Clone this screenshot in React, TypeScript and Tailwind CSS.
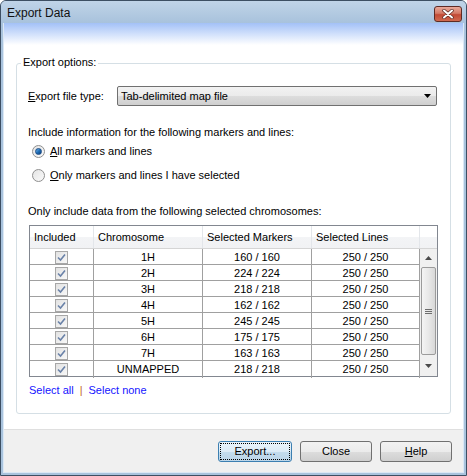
import React, { useState } from 'react';

type Row = { chrom: string; markers: string; lines: string };

const ROWS: Row[] = [
  { chrom: '1H', markers: '160 / 160', lines: '250 / 250' },
  { chrom: '2H', markers: '224 / 224', lines: '250 / 250' },
  { chrom: '3H', markers: '218 / 218', lines: '250 / 250' },
  { chrom: '4H', markers: '162 / 162', lines: '250 / 250' },
  { chrom: '5H', markers: '245 / 245', lines: '250 / 250' },
  { chrom: '6H', markers: '175 / 175', lines: '250 / 250' },
  { chrom: '7H', markers: '163 / 163', lines: '250 / 250' },
  { chrom: 'UNMAPPED', markers: '218 / 218', lines: '250 / 250' },
];

const Radio = ({ checked }: { checked: boolean }) => (
  <span className="w-[13px] h-[13px] rounded-full border border-[#8f8f8f] bg-gradient-to-br from-[#e4e4e4] to-[#fafafa] flex items-center justify-center shrink-0">
    {checked && (
      <span className="w-[7px] h-[7px] rounded-full bg-gradient-to-br from-[#6fb4e8] via-[#1f6fb8] to-[#0d3d7a] border border-[#1a4b85]" />
    )}
  </span>
);

const CheckBox = () => (
  <span className="w-[13px] h-[13px] border border-[#a7a7a7] bg-gradient-to-br from-[#e2e2e2] to-[#f8f8f8] flex items-center justify-center">
    <svg width="9" height="9" viewBox="0 0 9 9">
      <path d="M1 4.5 L3.5 7 L8 1.5" fill="none" stroke="#6a82a8" strokeWidth="1.6" />
    </svg>
  </span>
);

const Button = ({ children, focused }: { children: React.ReactNode; focused?: boolean }) => (
  <button
    className={
      focused
        ? 'w-[74px] h-[21px] rounded-[3px] border border-[#3c7fb1] bg-[linear-gradient(#eaf4fb_0%,#dcebf6_50%,#c3dced_51%,#bcd5e8_100%)] p-[1px]'
        : 'w-[72px] h-[21px] rounded-[3px] border border-[#707070] bg-[linear-gradient(#f2f2f2_0%,#ebebeb_50%,#dddddd_51%,#cfcfcf_100%)]'
    }
  >
    {focused ? (
      <span className="w-full h-full border border-dotted border-black flex items-center justify-center">{children}</span>
    ) : (
      <span className="w-full h-full flex items-center justify-center">{children}</span>
    )}
  </button>
);

const App: React.FC = () => {
  const [mode, setMode] = useState<'all' | 'selected'>('all');

  return (
    <div className="w-[467px] h-[476px] bg-[#a9c3dd] border border-[#3d4f63] rounded-t-[6px] flex flex-col text-[11px] text-black font-['Liberation_Sans',Arial,sans-serif] select-none overflow-hidden">
      {/* Title bar */}
      <div className="h-[22px] shrink-0 flex items-center bg-gradient-to-b from-[#c0d4e8] to-[#a8c2dc] pl-[6px] pr-[4px]">
        <span className="text-[12px] text-[#111] mt-[2px]">Export Data</span>
        <button className="ml-auto mt-[3px] w-[28px] h-[16px] rounded-[3px] border border-[#5e2a24] bg-[linear-gradient(#e9a99a_0%,#d47a66_45%,#c24a35_55%,#d06a50_100%)] flex items-center justify-center">
          <svg width="12" height="10" viewBox="0 0 12 10">
            <path d="M2 1.5 L10 8.5 M10 1.5 L2 8.5" stroke="#5a2a22" strokeWidth="3.4" strokeLinecap="round" />
            <path d="M2 1.5 L10 8.5 M10 1.5 L2 8.5" stroke="#ffffff" strokeWidth="2" strokeLinecap="round" />
          </svg>
        </button>
      </div>

      {/* Client area */}
      <div className="flex-1 flex flex-col mx-[2px] mb-[2px] border-x border-b border-[#dbe8f5]">
        <div className="h-[406px] shrink-0 bg-[linear-gradient(#a3c1f7_0px,#ffffff_22px)] pt-[40px] pl-[12px]">
          {/* Group box */}
          <div className="relative w-[435px] h-[351px] border border-[#d5dfe5] rounded-[3px] pl-[11px] pt-[22px]">
            <span className="absolute left-[4px] top-[-8px] bg-white px-[2px] leading-[13px]">Export options:</span>

            <div className="flex items-center h-[20px]">
              <span className="w-[89px]">
                <u>E</u>xport file type:
              </span>
              <div className="w-[320px] h-[20px] border border-[#707070] rounded-[2px] bg-[linear-gradient(#f2f2f2_0%,#ebebeb_50%,#dddddd_51%,#cfcfcf_100%)] flex items-center pl-[3px] pr-[5px]">
                <span>Tab-delimited map file</span>
                <svg className="ml-auto" width="7" height="4" viewBox="0 0 7 4">
                  <path d="M0 0 L7 0 L3.5 4 Z" fill="#000" />
                </svg>
              </div>
            </div>

            <div className="mt-[20px] leading-[13px]">Include information for the following markers and lines:</div>

            <div className="mt-[6px] flex items-center gap-[5px] leading-[13px] pl-[4px]" onClick={() => setMode('all')}>
              <Radio checked={mode === 'all'} />
              <span>
                <u>A</u>ll markers and lines
              </span>
            </div>
            <div className="mt-[11px] flex items-center gap-[5px] leading-[13px] pl-[4px]" onClick={() => setMode('selected')}>
              <Radio checked={mode === 'selected'} />
              <span>
                <u>O</u>nly markers and lines I have selected
              </span>
            </div>

            <div className="mt-[23px] leading-[13px]">Only include data from the following selected chromosomes:</div>

            {/* Table */}
            <div className="mt-[7px] ml-[1px] w-[409px] border border-[#828790]">
              <div className="grid grid-cols-[64px_109px_109px_108px_17px] h-[23px] bg-[linear-gradient(#ffffff_0%,#ffffff_50%,#f3f4f6_51%,#f1f2f4_100%)] border-b border-[#d5d5d5]">
                <div className="flex items-center pl-[4px] border-r border-[#e3e6ea]">Included</div>
                <div className="flex items-center pl-[4px] border-r border-[#e3e6ea]">Chromosome</div>
                <div className="flex items-center pl-[4px] border-r border-[#e3e6ea]">Selected Markers</div>
                <div className="flex items-center pl-[4px] border-r border-[#e3e6ea]">Selected Lines</div>
                <div />
              </div>
              <div className="flex h-[127px]">
                <div className="w-[390px]">
                  {ROWS.map((r, i) => (
                    <div
                      key={r.chrom}
                      className={
                        i === ROWS.length - 1
                          ? 'grid grid-cols-[64px_109px_109px_108px] h-[15px]'
                          : 'grid grid-cols-[64px_109px_109px_108px] h-[16px] border-b border-[#a0a0a0]'
                      }
                    >
                      <div className="flex items-center justify-center border-r border-[#a0a0a0]">
                        <CheckBox />
                      </div>
                      <div className="flex items-center justify-center border-r border-[#a0a0a0]">{r.chrom}</div>
                      <div className="flex items-center justify-center border-r border-[#a0a0a0]">{r.markers}</div>
                      <div className="flex items-center justify-center border-r border-[#a0a0a0]">{r.lines}</div>
                    </div>
                  ))}
                </div>
                {/* Scrollbar */}
                <div className="w-[17px] bg-[#f0f0f0] flex flex-col items-center">
                  <div className="h-[17px] w-full flex items-center justify-center">
                    <svg width="7" height="4" viewBox="0 0 7 4">
                      <path d="M0 4 L7 4 L3.5 0 Z" fill="#4a4a4a" />
                    </svg>
                  </div>
                  <div className="w-[15px] h-[88px] mt-[1px] rounded-[2px] border border-[#9b9b9b] bg-[linear-gradient(90deg,#f4f4f4_0%,#e8e8e8_50%,#d8d8d8_100%)] flex flex-col items-center justify-center gap-[1px]">
                    <span className="w-[7px] h-[1px] bg-[#6d6d6d]" />
                    <span className="w-[7px] h-[1px] bg-[#6d6d6d]" />
                    <span className="w-[7px] h-[1px] bg-[#6d6d6d]" />
                  </div>
                  <div className="flex-1 w-full flex items-center justify-center">
                    <svg width="7" height="4" viewBox="0 0 7 4">
                      <path d="M0 0 L7 0 L3.5 4 Z" fill="#4a4a4a" />
                    </svg>
                  </div>
                </div>
              </div>
            </div>

            <div className="mt-[7px] ml-[1px] leading-[13px] flex items-center">
              <span className="text-[#1515ff]">Select all</span>
              <span className="mx-[6px] text-[#c06a2a]">|</span>
              <span className="text-[#1515ff]">Select none</span>
            </div>
          </div>
        </div>

        {/* Button bar */}
        <div className="flex-1 bg-[#f0f0f0] border-t border-[#dfdfdf] flex items-start justify-end gap-[8px] pt-[11px] pr-[11px]">
          <Button focused>Export...</Button>
          <Button>Close</Button>
          <Button>
            <u>H</u>elp
          </Button>
        </div>
      </div>
    </div>
  );
};

export default App;
